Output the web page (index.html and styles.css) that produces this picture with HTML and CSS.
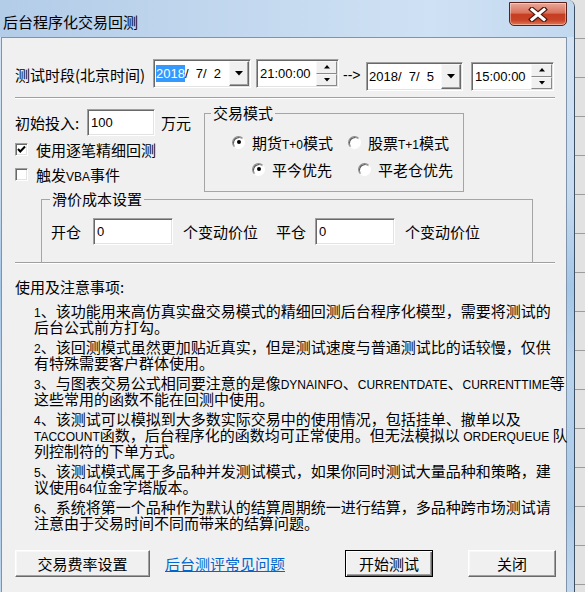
FILE: index.html
```html
<!DOCTYPE html>
<html lang="zh-CN">
<head>
    <meta charset="utf-8">
    <title>后台程序化交易回测</title>
    <link rel="stylesheet" href="styles.css">
</head>
<body>
    <div class="window">
        <div class="titlebar">
            <span class="title">后台程序化交易回测</span>
            <button class="close" title="关闭">
                <svg width="22" height="15" viewBox="0 0 22 15">
                    <path d="M5 2.5 L17 12.5 M17 2.5 L5 12.5" stroke="#4b1a12" stroke-width="5.5" stroke-linecap="square"/>
                    <path d="M5 2.5 L17 12.5 M17 2.5 L5 12.5" stroke="#ffffff" stroke-width="3" stroke-linecap="square"/>
                </svg>
            </button>
        </div>

        <div class="frame">
            <div class="client">
                <!-- time range -->
                <div class="range">
                    <span class="range-label">测试时段(北京时间)</span>
                    <div class="field date">
                        <span class="sel">2018</span><span>/&nbsp;&nbsp;7/&nbsp;&nbsp;2</span>
                        <span class="drop">
                            <svg width="8" height="5" viewBox="0 0 8 5"><polygon points="0,0 8,0 4,4.5" fill="#000"/></svg>
                        </span>
                    </div>
                    <div class="field time">
                        <span>21:00:00</span>
                        <span class="spin">
                            <span class="spin-btn"><svg width="6" height="4" viewBox="0 0 6 4"><polygon points="3,0 6,3.5 0,3.5" fill="#000"/></svg></span>
                            <span class="spin-btn"><svg width="6" height="4" viewBox="0 0 6 4"><polygon points="0,0 6,0 3,3.5" fill="#000"/></svg></span>
                        </span>
                    </div>
                    <span class="arrow">--&gt;</span>
                    <div class="field date end">
                        <span>2018/&nbsp;&nbsp;7/&nbsp;&nbsp;5</span>
                        <span class="drop">
                            <svg width="8" height="5" viewBox="0 0 8 5"><polygon points="0,0 8,0 4,4.5" fill="#000"/></svg>
                        </span>
                    </div>
                    <div class="field time end">
                        <span>15:00:00</span>
                        <span class="spin">
                            <span class="spin-btn"><svg width="6" height="4" viewBox="0 0 6 4"><polygon points="3,0 6,3.5 0,3.5" fill="#000"/></svg></span>
                            <span class="spin-btn"><svg width="6" height="4" viewBox="0 0 6 4"><polygon points="0,0 6,0 3,3.5" fill="#000"/></svg></span>
                        </span>
                    </div>
                </div>

                <hr class="sep first-sep">

                <div class="setup">
                    <div class="left">
                        <div class="capital">
                            <span class="capital-label">初始投入:</span>
                            <div class="field input capital-input">100</div>
                            <span class="unit-wan">万元</span>
                        </div>
                        <label class="check first">
                            <span class="checkbox">
                                <svg width="11" height="11" viewBox="0 0 11 11"><polyline points="2,5 4.3,7.5 9,2.5" fill="none" stroke="#000" stroke-width="2"/></svg>
                            </span>
                            <span>使用逐笔精细回测</span>
                        </label>
                        <label class="check">
                            <span class="checkbox"></span>
                            <span>触发<span class="en">VBA</span>事件</span>
                        </label>
                    </div>

                    <fieldset class="group mode">
                        <legend>交易模式</legend>
                        <div class="radio-row row-one">
                            <label class="radio-item wide"><span class="radio on"></span><span>期货<span class="en">T+0</span>模式</span></label>
                            <label class="radio-item"><span class="radio"></span><span>股票<span class="en">T+1</span>模式</span></label>
                        </div>
                        <div class="radio-row row-two">
                            <label class="radio-item narrow"><span class="radio on"></span><span>平今优先</span></label>
                            <label class="radio-item"><span class="radio"></span><span>平老仓优先</span></label>
                        </div>
                    </fieldset>
                </div>

                <fieldset class="group slip">
                    <legend>滑价成本设置</legend>
                    <div class="slip-row">
                        <span>开仓</span>
                        <div class="field input slip-input">0</div>
                        <span class="unit">个变动价位</span>
                        <span class="close-label">平仓</span>
                        <div class="field input slip-input second">0</div>
                        <span class="unit">个变动价位</span>
                    </div>
                </fieldset>

                <hr class="sep">

                <div class="notes">
                    <p class="notes-title">使用及注意事项:</p>
                    <p><span class="en">1</span>、该功能用来高仿真实盘交易模式的精细回测后台程序化模型，需要将测试的<br>后台公式前方打勾。</p>
                    <p><span class="en">2</span>、该回测模式虽然更加贴近真实，但是测试速度与普通测试比的话较慢，仅供<br>有特殊需要客户群体使用。</p>
                    <p><span class="en">3</span>、与图表交易公式相同要注意的是像<span class="en">DYNAINFO</span>、<span class="en">CURRENTDATE</span>、<span class="en">CURRENTTIME</span>等<br>这些常用的函数不能在回测中使用。</p>
                    <p><span class="en">4</span>、该测试可以模拟到大多数实际交易中的使用情况，包括挂单、撤单以及<br><span class="en">TACCOUNT</span>函数，后台程序化的函数均可正常使用。但无法模拟以 <span class="en">ORDERQUEUE</span> 队<br>列控制符的下单方式。</p>
                    <p><span class="en">5</span>、该测试模式属于多品种并发测试模式，如果你同时测试大量品种和策略，建<br>议使用<span class="en">64</span>位金字塔版本。</p>
                    <p><span class="en">6</span>、系统将第一个品种作为默认的结算周期统一进行结算，多品种跨市场测试请<br>注意由于交易时间不同而带来的结算问题。</p>
                </div>

                <div class="actions">
                    <button class="btn fee">交易费率设置</button>
                    <a class="faq" href="#">后台测评常见问题</a>
                    <button class="btn start default">开始测试</button>
                    <button class="btn quit">关闭</button>
                </div>
            </div>
        </div>
    </div>
</body>
</html>
```

FILE: styles.css
```css
* {
    box-sizing: border-box;
}

body {
    margin: 0;
    width: 585px;
    height: 592px;
    overflow: hidden;
    background: #e2e2e2 repeating-linear-gradient(to bottom, transparent 0, transparent 38px, #9c9c9c 38px, #9c9c9c 39px);
    font-family: "Noto Sans CJK SC", sans-serif;
    font-size: 15px;
    color: #000;
}

.en {
    font-family: "Liberation Sans", Arial, sans-serif;
    font-size: 12px;
    line-height: 10px;
}

/* window frame */
.window {
    width: 575px;
    height: 592px;
    display: flex;
    flex-direction: column;
    border-right: 1px solid #3c4f63;
    border-top-right-radius: 7px;
    overflow: hidden;
}

.titlebar {
    height: 37px;
    display: flex;
    align-items: flex-start;
    padding: 0 7px 0 3px;
    background: linear-gradient(to right, #b3cce8, #c4d9ef 45%, #cfe1f4 75%, #c2d8ef);
}

.title {
    margin-top: 13px;
    line-height: 18px;
    white-space: nowrap;
}

.close {
    margin: 2px 0 0 auto;
    width: 58px;
    height: 24px;
    padding: 0;
    display: flex;
    align-items: center;
    justify-content: center;
    border: 1px solid #5b2118;
    border-radius: 0 0 5px 5px;
    background: linear-gradient(to bottom, #e9a898 0, #d9735d 45%, #c63d22 52%, #c94428 78%, #e0785a 100%);
    box-shadow: inset 0 0 0 1px rgba(255, 255, 255, 0.4);
}

.frame {
    flex: 1;
    display: flex;
    padding: 0 7px 0 1px;
    background: linear-gradient(to bottom, #d3e3f4 0, #c7dbf0 28%, #a4c6e7 45%, #b9d3ec 60%, #a9c9e8 85%, #c3d8ee 100%);
}

.client {
    width: 566px;
    background: #f0f0f0;
    border: 1px solid #7f93aa;
    border-bottom: none;
}

/* sunken edit fields */
.field {
    display: flex;
    align-items: center;
    background: #fff;
    border: 1px solid;
    border-color: #a0a0a0 #fff #fff #a0a0a0;
    box-shadow: inset 1px 1px #696969, inset -1px -1px #e3e3e3;
    font-family: "Liberation Sans", Arial, sans-serif;
    font-size: 13px;
    white-space: nowrap;
}

.range {
    display: flex;
    align-items: flex-start;
    height: 32px;
    margin-top: 21px;
    padding-left: 13px;
}

.range-label {
    width: 138px;
    line-height: 32px;
    white-space: nowrap;
}

.date {
    width: 98px;
    height: 29px;
    padding-left: 2px;
}

.date .sel {
    background: #3399ff;
    color: #fff;
    line-height: 17px;
}

.time {
    width: 83px;
    height: 29px;
    margin-left: 5px;
    padding-left: 3px;
}

.date.end {
    width: 97px;
    margin-left: 4px;
    margin-top: 3px;
}

.time.end {
    margin-left: 8px;
    margin-top: 3px;
}

.arrow {
    width: 19px;
    margin-left: 4px;
    line-height: 33px;
    font-family: "Liberation Sans", Arial, sans-serif;
    font-size: 14px;
}

.drop {
    margin: 0 1px 0 auto;
    width: 20px;
    height: 25px;
    display: flex;
    align-items: center;
    justify-content: center;
    background: #f0f0f0;
    border: 1px solid;
    border-color: #f8f8f8 #696969 #696969 #f8f8f8;
    box-shadow: inset -1px -1px #a0a0a0;
}

.spin {
    margin: 0 1px 0 auto;
    width: 21px;
    height: 25px;
    display: flex;
    flex-direction: column;
}

.spin-btn {
    flex: 1;
    display: flex;
    align-items: center;
    justify-content: center;
    background: #f0f0f0;
    border: 1px solid;
    border-color: #f8f8f8 #8a8a8a #8a8a8a #f8f8f8;
}

.sep {
    height: 0;
    width: 540px;
    margin: 0 0 0 13px;
    border: none;
    border-top: 1px solid #a0a0a0;
    border-bottom: 1px solid #fff;
}

.first-sep {
    margin-top: 6px;
}

/* capital + options */
.setup {
    display: flex;
    padding-left: 13px;
}

.left {
    width: 189px;
    padding-top: 10px;
}

.capital {
    display: flex;
    align-items: center;
    height: 27px;
    white-space: nowrap;
}

.capital-label {
    width: 72px;
}

.input {
    height: 27px;
    padding-left: 3px;
}

.capital-input {
    width: 68px;
}

.unit-wan {
    margin-left: 6px;
}

.check {
    display: flex;
    align-items: center;
    gap: 8px;
    height: 25px;
    white-space: nowrap;
}

.check.first {
    margin-top: 1px;
}

.checkbox {
    width: 13px;
    height: 13px;
    display: flex;
    align-items: center;
    justify-content: center;
    background: #fff;
    border: 1px solid;
    border-color: #a0a0a0 #fff #fff #a0a0a0;
    box-shadow: inset 1px 1px #696969, inset -1px -1px #e3e3e3;
}

.group {
    margin: 0;
    padding: 0;
    border: 1px solid #a5a5a5;
    min-width: 0;
}

.group legend {
    padding: 0 2px;
    line-height: 16px;
    white-space: nowrap;
}

.mode {
    width: 260px;
    margin-top: 6px;
}

.mode legend {
    margin-left: 6px;
}

.radio-row {
    display: flex;
    align-items: center;
    height: 20px;
    white-space: nowrap;
}

.row-one {
    margin-top: 11px;
    padding-left: 27px;
}

.row-two {
    margin: 7px 0 12px;
    padding-left: 47px;
}

.radio-item {
    display: flex;
    align-items: center;
    gap: 7px;
}

.radio-item.wide {
    width: 116px;
}

.radio-item.narrow {
    width: 106px;
}

.radio {
    width: 13px;
    height: 13px;
    display: flex;
    align-items: center;
    justify-content: center;
    border-radius: 50%;
    background: #fff;
    border: 1px solid;
    border-color: #8a8a8a #fff #fff #8a8a8a;
    box-shadow: inset 1px 1px #5a5a5a;
}

.radio.on::after {
    content: "";
    width: 4px;
    height: 4px;
    border-radius: 50%;
    background: #000;
}

/* slippage */
.slip {
    width: 492px;
    margin: -1px 0 0 39px;
    border-bottom: none;
}

.slip legend {
    margin-left: 8px;
}

.slip-row {
    display: flex;
    align-items: center;
    height: 27px;
    margin: 11px 0 17px;
    padding-left: 9px;
    white-space: nowrap;
}

.slip-input {
    width: 80px;
    margin-left: 12px;
}

.slip-input.second {
    margin-left: 9px;
}

.unit {
    margin-left: 10px;
}

.close-label {
    margin-left: 18px;
}

/* notes */
.notes {
    margin-top: 15px;
    padding-left: 13px;
    white-space: nowrap;
}

.notes p {
    margin: 4px 0 0 19px;
    line-height: 16px;
}

.notes .notes-title {
    margin: 0 0 8px;
}

/* buttons */
.actions {
    display: flex;
    align-items: center;
    margin-top: 19px;
    padding-left: 13px;
}

.btn {
    height: 27px;
    padding: 0;
    font: inherit;
    color: #000;
    background: #f0f0f0;
    border: 1px solid;
    border-color: #fff #696969 #696969 #fff;
    box-shadow: inset -1px -1px #a0a0a0, inset 1px 1px #f8f8f8;
}

.btn.default {
    border-color: #000;
    box-shadow: inset 1px 1px #fff, inset -1px -1px #696969, inset -2px -2px #a0a0a0;
}

.fee {
    width: 135px;
}

.faq {
    margin-left: 15px;
    color: #0066cc;
    text-decoration: underline;
}

.start {
    width: 88px;
    margin-left: 60px;
}

.quit {
    width: 88px;
    margin-left: 35px;
}
```
